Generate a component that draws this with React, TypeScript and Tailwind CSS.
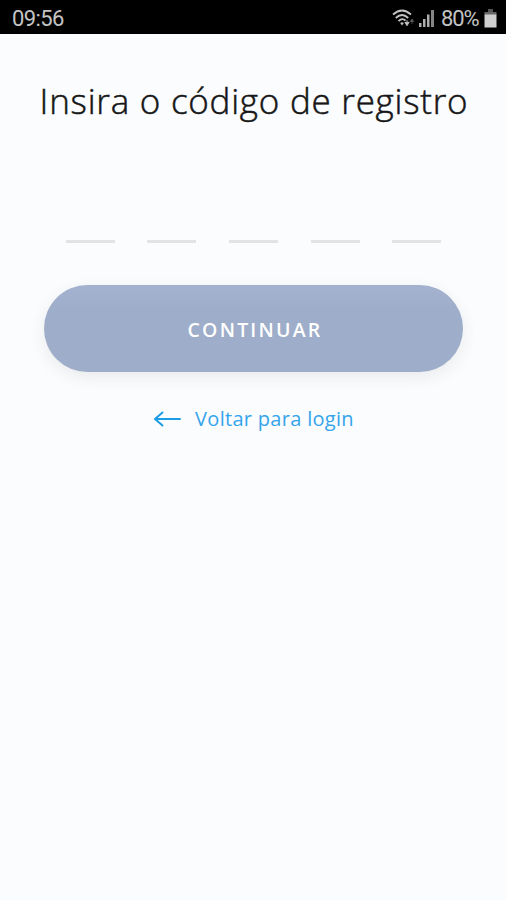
const CODE_LENGTH = 5;

function StatusBar() {
  return (
    <div className="flex h-[34px] shrink-0 items-center justify-between bg-black pl-3 pr-[9px] pt-[3px] font-['Roboto',sans-serif] text-[22px] leading-none text-[#c4c4c4]">
      <span className="w-[52px] whitespace-nowrap tracking-[-0.6px]">09:56</span>
      <div className="flex items-center">
        <svg width="23" height="20" viewBox="0 0 23 20" fill="none" stroke="#c4c4c4" strokeWidth="1.8">
          <path d="M1 5.5Q10 -2.5 19 5.5" />
          <path d="M3.8 9Q10 3 16.2 9" />
          <path d="M6.5 12.2Q10 8.5 13.5 11.5" />
          <path d="M8.2 14Q10 12.5 11.8 14L10 16.5Z" fill="#c4c4c4" stroke="none" />
          <path d="M15 11v3M12.8 13.3h4.4L15 16.8z" fill="#c4c4c4" strokeWidth="0.8" />
          <path d="M20 15v-3M18.3 12.5h3.4L20 10z" fill="#5c5c5c" stroke="#5c5c5c" strokeWidth="0.8" />
        </svg>
        <svg className="ml-[3px]" width="18" height="20" viewBox="0 0 18 20" fill="#adadad">
          <rect x="1" y="14" width="2.5" height="4" />
          <rect x="5" y="10" width="2.5" height="8" />
          <rect x="9" y="5.5" width="2.5" height="12.5" />
          <rect x="13" y="1" width="3" height="17" fill="#858585" />
        </svg>
        <span className="ml-[5px] w-[39px] whitespace-nowrap tracking-[-1.1px]">80%</span>
        <svg className="ml-1" width="13" height="20" viewBox="0 0 13 20">
          <rect x="4" y="0" width="5" height="3" fill="#555" />
          <rect x="0.5" y="3" width="12" height="3" fill="#666" />
          <rect x="0.5" y="5.5" width="12" height="13" fill="#cfcfcf" />
        </svg>
      </div>
    </div>
  );
}

export default function App() {
  return (
    <div className="flex min-h-[900px] w-full flex-col bg-[#fafcfe] font-['Open_Sans',sans-serif]">
      <StatusBar />

      <main className="flex flex-col items-center">
        <h1 className="mt-[42px] whitespace-nowrap pl-[2px] text-[35px] font-light leading-[50px] tracking-[0.75px] text-[#161616] [-webkit-text-stroke:0.5px_#161616]">
          Insira o código de registro
        </h1>

        <div className="mt-[114px] flex gap-[32.6px] pl-px">
          {Array.from({ length: CODE_LENGTH }, (_, i) => (
            <span key={i} className="h-[3px] w-[49px] bg-[#e1e3e5]" />
          ))}
        </div>

        <button
          type="button"
          className="ml-px mt-[42px] h-[87px] w-[419px] rounded-full bg-[#9eadc9] bg-linear-to-b from-[#a4b2cf] via-[#9eadc9] via-30% to-[#9eadc9] pl-[3px] pt-[3px] text-[19.5px] font-semibold tracking-[2.2px] text-white shadow-[0_5px_16px_rgba(60,60,60,0.09)]"
        >
          CONTINUAR
        </button>

        <a href="#" className="ml-px mt-[31px] flex h-8 items-center gap-[13px] text-[20px] leading-8 tracking-[0.3px] text-[#35a4ea]">
          <svg width="29" height="18" viewBox="0 0 29 18" fill="none" stroke="#1b9ce5" strokeWidth="2" strokeLinecap="round" strokeLinejoin="round">
            <path d="M2 9h25M9.5 2.5L2 9L9.5 15.5" />
          </svg>
          <span className="whitespace-nowrap">Voltar para login</span>
        </a>
      </main>
    </div>
  );
}
